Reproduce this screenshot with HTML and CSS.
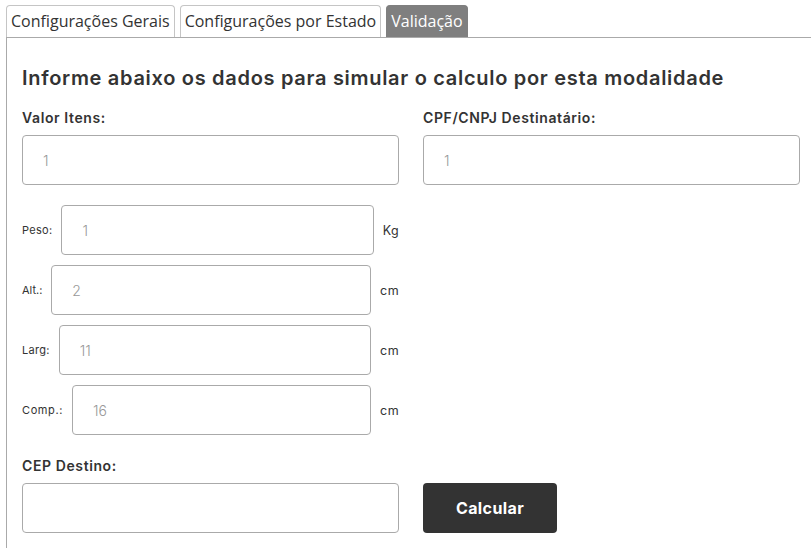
FILE: index.html
```html
<!DOCTYPE html>
<html>

<head>
    <title>Validação</title>
    <link rel="stylesheet" href="styles.css">
</head>

<body>
    <ul class="tabs">
        <li class="tab">Configurações Gerais</li>
        <li class="tab">Configurações por Estado</li>
        <li class="tab active">Validação</li>
    </ul>
    <div class="panel">
        <h2>Informe abaixo os dados para simular o calculo por esta modalidade</h2>
        <div class="cols">
            <div class="col">
                <label class="field-label">Valor Itens:</label>
                <input type="text" class="field" value="1">
            </div>
            <div class="col">
                <label class="field-label">CPF/CNPJ Destinatário:</label>
                <input type="text" class="field" value="1">
            </div>
        </div>
        <div class="dims">
            <div class="dim-row">
                <span class="dim-label">Peso:</span>
                <input type="text" class="field" value="1">
                <span class="unit">Kg</span>
            </div>
            <div class="dim-row">
                <span class="dim-label alt">Alt.:</span>
                <input type="text" class="field" value="2">
                <span class="unit">cm</span>
            </div>
            <div class="dim-row">
                <span class="dim-label">Larg:</span>
                <input type="text" class="field" value="11">
                <span class="unit">cm</span>
            </div>
            <div class="dim-row">
                <span class="dim-label comp">Comp.:</span>
                <input type="text" class="field" value="16">
                <span class="unit">cm</span>
            </div>
        </div>
        <label class="field-label">CEP Destino:</label>
        <div class="cols">
            <div class="col">
                <input type="text" class="field">
            </div>
            <div class="col">
                <button class="btn">Calcular</button>
            </div>
        </div>
    </div>
</body>

</html>
```
FILE: styles.css
```css
body {
    margin: 0;
    padding: 5px 0 0 6px;
    font-family: Inter, sans-serif;
    color: #333;
    background: #fff;
    overflow: hidden;
}

.tabs {
    list-style: none;
    margin: 0;
    padding: 0;
    display: flex;
    gap: 5px;
}

.tab {
    font-family: "Open Sans", sans-serif;
    font-size: 16px;
    color: #333;
    height: 31px;
    line-height: 31px;
    padding: 0 4px;
    border: 1px solid #c5c5c5;
    border-bottom: none;
    border-radius: 4px 4px 0 0;
    background: #fff;
}

.tab.active {
    background: #7f7f7f;
    border-color: #7f7f7f;
    color: #fff;
}

.panel {
    border-top: 1px solid #aaa;
    border-left: 1px solid #aaa;
    padding: 20px 0 20px 15px;
}

.panel h2 {
    margin: 8px 0 19px;
    font-size: 20px;
    font-weight: 600;
    letter-spacing: 0.7px;
    color: #333;
}

.cols {
    display: flex;
    gap: 24px;
}

.col {
    width: 377px;
}

.field-label {
    display: block;
    font-size: 14px;
    font-weight: 600;
    letter-spacing: 0.6px;
    margin-bottom: 9px;
}

.field {
    display: block;
    width: 100%;
    height: 50px;
    box-sizing: border-box;
    border: 1px solid #aaa;
    border-radius: 4px;
    padding: 0 20px;
    font-family: Inter, sans-serif;
    font-size: 14px;
    font-weight: 300;
    color: #999;
}

.dims {
    width: 377px;
    margin: 20px 0 22px;
    display: flex;
    flex-direction: column;
    gap: 10px;
}

.dim-row {
    display: flex;
    align-items: center;
    gap: 9px;
    font-size: 11px;
    letter-spacing: 0.3px;
}

.dim-label.alt {
    letter-spacing: 0;
}

.dim-label.comp {
    letter-spacing: 0.6px;
}

.dim-row .field {
    flex: 1;
    width: auto;
    letter-spacing: 0;
}

.unit {
    font-size: 12.5px;
    letter-spacing: 0.4px;
}

.btn {
    width: 134px;
    height: 50px;
    border: none;
    border-radius: 4px;
    background: #333;
    color: #fff;
    font-family: Inter, sans-serif;
    font-size: 16px;
    font-weight: 700;
    letter-spacing: 0.4px;
}
```
